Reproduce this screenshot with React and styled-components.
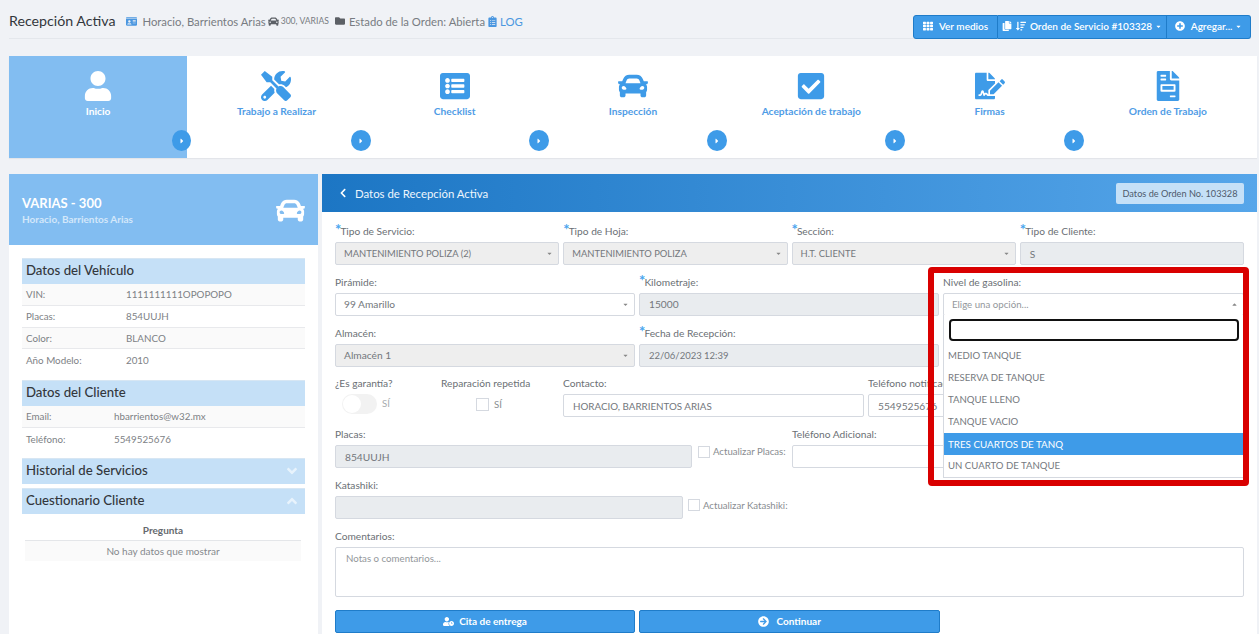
import React from 'react';
import styled, { createGlobalStyle } from 'styled-components';
import {
  FaUser, FaTools, FaListAlt, FaCar, FaCheckSquare, FaFileSignature, FaFileInvoice, FaCaretRight,
  FaTh, FaCopy, FaSortAmountDown, FaPlusCircle, FaIdCard, FaFolder, FaClipboardList, FaChevronLeft,
  FaAngleDown, FaAngleUp, FaUserClock, FaArrowCircleRight, FaCaretDown, FaCaretUp,
} from 'react-icons/fa';

const FONT = '"Lato", "Noto Sans", "Liberation Sans", sans-serif';

const Global = createGlobalStyle`
  html, body { margin: 0; padding: 0; height: 634px; overflow: hidden; background: #f0f2f6; }
  body { font-family: ${FONT}; color: #6b7075; }
  * { box-sizing: border-box; }
`;

const Page = styled.div`
  width: 1259px;
  height: 634px;
  overflow: hidden;
  padding: 0 2px 0 9px;
`;

const TopBar = styled.header`
  height: 39px;
  margin-right: 6px;
  border-bottom: 1px solid #e4e7ec;
  display: flex;
  align-items: flex-start;
  justify-content: space-between;
  padding-top: 12px;
`;
const Crumbs = styled.div`
  display: flex;
  align-items: center;
  height: 18px;
  font-size: 11.3px;
  color: #787c82;
  white-space: nowrap;
`;
const PageTitle = styled.h1`
  margin: -2px 10px 0 0;
  font-size: 14.2px;
  font-weight: 400;
  color: #33373c;
`;
const CrumbIcon = styled.span`
  display: inline-flex;
  margin: 0 ${p => p.$gap ?? 4}px 0 ${p => p.$before ?? 0}px;
  font-size: ${p => p.$size ?? 11}px;
  color: ${p => p.$color ?? '#5c6066'};
`;
const Small = styled.span`
  font-size: 8.6px;
  margin-right: 6px;
`;
const LogLink = styled.span`
  color: #4b97e0;
`;

const BtnGroup = styled.div`
  display: flex;
  height: 24px;
  margin-top: 3px;
`;
const TopBtn = styled.button`
  height: 24px;
  width: ${p => p.$w}px;
  border: 1px solid #1f7cc9;
  border-left-width: ${p => (p.$first ? 1 : 0)}px;
  border-radius: ${p => (p.$first ? '3px 0 0 3px' : p.$last ? '0 3px 3px 0' : '0')};
  background: #3e9be8;
  color: #fff;
  font: 600 10px ${FONT};
  display: flex;
  align-items: center;
  justify-content: center;
  gap: 4px;
  padding: 0 0 2px;
  white-space: nowrap;
  svg { font-size: 10px; flex: none; }
`;
const MiniCaret = styled(FaCaretDown)`
  && { font-size: 7px; margin-left: -1px; }
`;

const Wizard = styled.nav`
  margin-top: 17px;
  height: 102px;
  background: #fff;
  display: grid;
  grid-template-columns: repeat(7, 1fr);
  box-shadow: 0 1px 1px #e3e5ea;
`;
const Step = styled.div`
  position: relative;
  background: ${p => (p.$active ? '#82bdf1' : '#fff')};
  color: ${p => (p.$active ? '#fff' : '#3e9be8')};
  display: flex;
  flex-direction: column;
  align-items: center;
  padding-top: 14px;
`;
const StepIcon = styled.div`
  height: 32px;
  display: flex;
  align-items: center;
  justify-content: center;
  font-size: 30px;
`;
const StepLabel = styled.div`
  margin-top: 2px;
  font-size: 10.2px;
  line-height: 14px;
  font-weight: 700;
  color: ${p => (p.$active ? '#fff' : '#4f9ce6')};
`;
const StepArrow = styled.span`
  position: absolute;
  right: ${p => (p.$first ? -4 : -5)}px;
  top: 74px;
  width: ${p => (p.$first ? 19 : 20)}px;
  height: 21px;
  border-radius: 50%;
  background: #3e9be8;
  color: #fff;
  font-size: 8px;
  display: flex;
  align-items: center;
  justify-content: center;
  z-index: 1;
`;

const Content = styled.div`
  margin-top: 16px;
  display: flex;
  gap: 4px;
  height: 460px;
`;

const Sidebar = styled.aside`
  width: 309px;
  flex: none;
  background: #fff;
`;
const SideHead = styled.div`
  height: 71px;
  background: #82bdf1;
  padding: 2px 13px 0;
  display: flex;
  align-items: center;
  justify-content: space-between;
  color: #fff;
`;
const SideTitle = styled.div`
  font-size: 13px;
  font-weight: 700;
  line-height: 17px;
`;
const SideSub = styled.div`
  font-size: 10px;
  font-weight: 700;
  line-height: 14px;
  color: #d3e7fa;
`;
const SideCar = styled(FaCar)`
  font-size: 29px;
`;
const SideBody = styled.div`
  padding: 13px 13px 0;
`;
const SectionHead = styled.div`
  height: 26px;
  margin-top: ${p => p.$mt ?? 0}px;
  padding: 0 4px ${p => p.$pb ?? 3}px;
  background: #c5e0f7;
  border-top: 1px solid #d7e6f3;
  display: flex;
  align-items: center;
  justify-content: space-between;
  font-size: 13.2px;
  font-weight: 500;
  color: #33373c;
  svg { color: #e8f3fc; font-size: 16px; margin: 3px 1px 0 0; }
`;
const InfoRow = styled.div`
  height: 21.75px;
  padding-left: 4px;
  display: grid;
  grid-template-columns: ${p => p.$col}px 1fr;
  align-items: center;
  font-size: 9.8px;
  color: #7d8185;
  background: ${p => (p.$odd ? '#fafafa' : '#fff')};
  border-bottom: ${p => (p.$last ? 'none' : '1px solid #e8e9ec')};
`;
const QTable = styled.div`
  margin: 0 4px 0 3px;
  text-align: center;
  font-size: 10px;
`;
const QHead = styled.div`
  height: 27px;
  line-height: 33px;
  font-weight: 700;
  color: #65696e;
  border-bottom: 1px solid #e4e6e9;
`;
const QRow = styled.div`
  height: 20px;
  line-height: 20px;
  background: #fafafa;
  color: #85898d;
`;

const Main = styled.main`
  width: 935px;
  flex: none;
  background: #fff;
`;
const MainHead = styled.div`
  height: 38px;
  background: linear-gradient(90deg, #1c76c4 0%, #56a6ea 100%);
  padding: 0 13px 0 16px;
  display: flex;
  align-items: center;
  color: #fff;
`;
const BackIcon = styled(FaChevronLeft)`
  font-size: 10px;
  margin-right: 7px;
`;
const MainTitle = styled.div`
  font-size: 11.4px;
  color: #eef6fd;
  flex: 1;
`;
const OrderTag = styled.div`
  width: 128px;
  height: 21px;
  background: #c5e0f7;
  border-radius: 2px;
  color: #4e5a6b;
  font-size: 9.2px;
  display: flex;
  align-items: center;
  justify-content: center;
`;
const Form = styled.form`
  padding: 12px 13px 0;
`;
const Row = styled.div`
  display: grid;
  grid-template-columns: ${p => p.$cols};
  gap: 0 ${p => p.$gap ?? 4}px;
  margin-bottom: 9.8px;
`;
const Field = styled.div`
  position: relative;
  min-width: 0;
`;
const Label = styled.label`
  display: block;
  height: 14px;
  margin-bottom: 4px;
  font-size: 10.2px;
  line-height: 14px;
  color: #6b7075;
  white-space: nowrap;
`;
const Star = styled.span`
  color: #4aa5ee;
  font-size: 15px;
  line-height: 0;
  font-weight: 700;
  margin-right: -1px;
`;
const Input = styled.div`
  height: ${p => p.$h ?? 23}px;
  border: 1px solid #d5d9e0;
  border-radius: 2px;
  background: ${p => (p.$disabled ? '#e9ecef' : '#fff')};
  color: #73777c;
  font-size: ${p => p.$fs ?? 10.2}px;
  padding: ${p => (p.$h ? '4px 10px' : '0 9px')};
  display: flex;
  align-items: ${p => (p.$h ? 'flex-start' : 'center')};
  white-space: nowrap;
  overflow: hidden;
`;
const Select = styled.div`
  height: 23px;
  border: 1px solid #d5d9e0;
  border-radius: 2px;
  background: ${p => (p.$disabled ? '#eeeeee' : '#fff')};
  color: #73777c;
  font-size: ${p => p.$fs ?? 10.2}px;
  padding: 0 5px 0 8px;
  display: flex;
  align-items: center;
  justify-content: space-between;
  svg { font-size: 7px; color: #888; flex: none; }
`;
const Placeholder = styled.span`
  color: #93979b;
  font-size: 9.7px;
`;
const CheckWrap = styled.div`
  display: flex;
  align-items: center;
  gap: ${p => p.$gap ?? 5}px;
  height: 23px;
  margin-top: ${p => p.$mt ?? 0}px;
  padding-left: ${p => p.$pl ?? 0}px;
  font-size: 9.6px;
  white-space: nowrap;
`;
const Check = styled.span`
  width: ${p => p.$size ?? 13}px;
  height: ${p => p.$size ?? 13}px;
  flex: none;
  border: 1px solid #d5d9e0;
  background: #fff;
`;
const CheckText = styled.span`
  color: ${p => (p.$dark ? '#888c90' : '#a6aaae')};
`;
const Toggle = styled.span`
  width: 35px;
  height: 20px;
  margin-left: 7px;
  border-radius: 10px;
  background: #f2f2f2;
  display: flex;
  align-items: center;
  &::before {
    content: '';
    width: 18px;
    height: 18px;
    border-radius: 50%;
    background: #fff;
    margin-left: 1px;
  }
`;

const RedFrame = styled.div`
  position: absolute;
  left: -15px;
  top: -8px;
  width: 321px;
  height: 219px;
  border: 6px solid #d90000;
  border-radius: 4px;
  z-index: 3;
  pointer-events: none;
`;
const Dropdown = styled.div`
  position: absolute;
  left: 0;
  right: 0;
  top: 40px;
  height: 163px;
  background: #fff;
  border: 1px solid #d5d9e0;
  border-top: none;
  z-index: 2;
`;
const SearchBox = styled.div`
  height: 22px;
  margin: 4px 4px 4px 5px;
  border: 2px solid #111;
  border-radius: 4px;
  background: #fff;
`;
const Option = styled.div`
  height: 22px;
  padding-left: 4px;
  display: flex;
  align-items: center;
  font-size: ${p => (p.$hl ? 9.8 : 9.6)}px;
  color: ${p => (p.$hl ? '#fff' : '#75797e')};
  background: ${p => (p.$hl ? '#3e9be8' : 'transparent')};
`;
const Actions = styled.div`
  display: grid;
  grid-template-columns: 300px 301px;
  gap: 4px;
  margin-top: 13px;
`;
const ActionBtn = styled.button`
  height: 23px;
  border: 1px solid #1f7cc9;
  border-radius: 2px;
  background: #3e9be8;
  color: #fff;
  font: 700 10px ${FONT};
  display: flex;
  align-items: center;
  justify-content: center;
  gap: 5px;
  padding: 0;
  svg { font-size: 11px; }
`;

const steps = [
  ['Inicio', FaUser], ['Trabajo a Realizar', FaTools], ['Checklist', FaListAlt], ['Inspección', FaCar],
  ['Aceptación de trabajo', FaCheckSquare], ['Firmas', FaFileSignature], ['Orden de Trabajo', FaFileInvoice],
];
const vehicle = [['VIN:', '1111111111OPOPOPO'], ['Placas:', '854UUJH'], ['Color:', 'BLANCO'], ['Año Modelo:', '2010']];
const client = [['Email:', 'hbarrientos@w32.mx'], ['Teléfono:', '5549525676']];
const options = ['MEDIO TANQUE', 'RESERVA DE TANQUE', 'TANQUE LLENO', 'TANQUE VACIO', 'TRES CUARTOS DE TANQ', 'UN CUARTO DE TANQUE'];
const THREE = '300px 300px 301px';

export default function App() {
  return (
    <Page>
      <Global />
      <TopBar>
        <Crumbs>
          <PageTitle>Recepción Activa</PageTitle>
          <CrumbIcon $color="#4b97e0" $before={1} $gap={5}><FaIdCard /></CrumbIcon>
          Horacio, Barrientos Arias
          <CrumbIcon $before={2} $gap={2}><FaCar /></CrumbIcon>
          <Small>300, VARIAS</Small>
          <CrumbIcon $size={10}><FaFolder /></CrumbIcon>
          Estado de la Orden: Abierta
          <CrumbIcon $color="#4b97e0" $before={2} $gap={2}><FaClipboardList /></CrumbIcon>
          <LogLink>LOG</LogLink>
        </Crumbs>
        <BtnGroup>
          <TopBtn $first $w={85}><FaTh />&nbsp;Ver medios</TopBtn>
          <TopBtn $w={169}><FaCopy /><FaSortAmountDown />Orden de Servicio #103328<MiniCaret /></TopBtn>
          <TopBtn $last $w={84}><FaPlusCircle />&nbsp;Agregar...<MiniCaret /></TopBtn>
        </BtnGroup>
      </TopBar>

      <Wizard>
        {steps.map(([label, Icon], i) => (
          <Step key={label} $active={i === 0}>
            <StepIcon><Icon /></StepIcon>
            <StepLabel $active={i === 0}>{label}</StepLabel>
            {i < 6 && <StepArrow $first={i === 0}><FaCaretRight /></StepArrow>}
          </Step>
        ))}
      </Wizard>

      <Content>
        <Sidebar>
          <SideHead>
            <div>
              <SideTitle>VARIAS - 300</SideTitle>
              <SideSub>Horacio, Barrientos Arias</SideSub>
            </div>
            <SideCar />
          </SideHead>
          <SideBody>
            <SectionHead>Datos del Vehículo</SectionHead>
            {vehicle.map(([k, v], i) => (
              <InfoRow key={k} $col={100} $odd={i % 2 === 0} $last={i === 3}><span>{k}</span><span>{v}</span></InfoRow>
            ))}
            <SectionHead $mt={9}>Datos del Cliente</SectionHead>
            {client.map(([k, v], i) => (
              <InfoRow key={k} $col={88} $odd={i === 0} $last={i === 1}><span>{k}</span><span>{v}</span></InfoRow>
            ))}
            <SectionHead $mt={8.5} $pb={4}>Historial de Servicios<FaAngleDown /></SectionHead>
            <SectionHead $mt={4} $pb={4}>Cuestionario Cliente<FaAngleUp /></SectionHead>
            <QTable>
              <QHead>Pregunta</QHead>
              <QRow>No hay datos que mostrar</QRow>
            </QTable>
          </SideBody>
        </Sidebar>

        <Main>
          <MainHead>
            <BackIcon />
            <MainTitle>Datos de Recepción Activa</MainTitle>
            <OrderTag>Datos de Orden No. 103328</OrderTag>
          </MainHead>
          <Form>
            <Row $cols="repeat(4, 1fr)">
              <Field><Label><Star>*</Star>Tipo de Servicio:</Label><Select $disabled $fs={9.4}>MANTENIMIENTO POLIZA (2)<FaCaretDown /></Select></Field>
              <Field><Label><Star>*</Star>Tipo de Hoja:</Label><Select $disabled $fs={9.4}>MANTENIMIENTO POLIZA<FaCaretDown /></Select></Field>
              <Field><Label><Star>*</Star>Sección:</Label><Select $disabled $fs={9.4}>H.T. CLIENTE<FaCaretDown /></Select></Field>
              <Field><Label><Star>*</Star>Tipo de Cliente:</Label><Input $disabled>S</Input></Field>
            </Row>
            <Row $cols={THREE}>
              <Field><Label>Pirámide:</Label><Select>99 Amarillo<FaCaretDown /></Select></Field>
              <Field><Label><Star>*</Star>Kilometraje:</Label><Input $disabled>15000</Input></Field>
              <Field>
                <Label>Nivel de gasolina:</Label>
                <Select><Placeholder>Elige una opción...</Placeholder><FaCaretUp /></Select>
                <Dropdown>
                  <SearchBox />
                  {options.map((o, i) => <Option key={o} $hl={i === 4}>{o}</Option>)}
                </Dropdown>
                <RedFrame />
              </Field>
            </Row>
            <Row $cols={THREE}>
              <Field><Label>Almacén:</Label><Select $disabled>Almacén 1<FaCaretDown /></Select></Field>
              <Field><Label><Star>*</Star>Fecha de Recepción:</Label><Input $disabled $fs={9.5}>22/06/2023 12:39</Input></Field>
              <Field />
            </Row>
            <Row $cols="102px 118px 301px 1fr">
              <Field>
                <Label>¿Es garantía?</Label>
                <CheckWrap $mt={-2}><Toggle /><CheckText>SÍ</CheckText></CheckWrap>
              </Field>
              <Field>
                <Label>Reparación repetida</Label>
                <CheckWrap $pl={35} $mt={-1}><Check /><CheckText $dark>SÍ</CheckText></CheckWrap>
              </Field>
              <Field><Label>Contacto:</Label><Input $fs={9.8}>HORACIO, BARRIENTOS ARIAS</Input></Field>
              <Field><Label>Teléfono notificación:</Label><Input>5549525676</Input></Field>
            </Row>
            <Row $cols="357px 88px 1fr" $gap={6}>
              <Field><Label>Placas:</Label><Input $disabled>854UUJH</Input></Field>
              <CheckWrap $gap={3} $mt={13}><Check $size={12} /><CheckText $dark>Actualizar Placas:</CheckText></CheckWrap>
              <Field><Label>Teléfono Adicional:</Label><Input /></Field>
            </Row>
            <Row $cols="348px 1fr" $gap={5}>
              <Field><Label>Katashiki:</Label><Input $disabled /></Field>
              <CheckWrap $gap={3} $mt={16}><Check $size={12} /><CheckText $dark>Actualizar Katashiki:</CheckText></CheckWrap>
            </Row>
            <Field>
              <Label>Comentarios:</Label>
              <Input $h={50}><Placeholder>Notas o comentarios...</Placeholder></Input>
            </Field>
            <Actions>
              <ActionBtn type="button"><FaUserClock />Cita de entrega</ActionBtn>
              <ActionBtn type="button"><FaArrowCircleRight />&nbsp;Continuar</ActionBtn>
            </Actions>
          </Form>
        </Main>
      </Content>
    </Page>
  );
}
